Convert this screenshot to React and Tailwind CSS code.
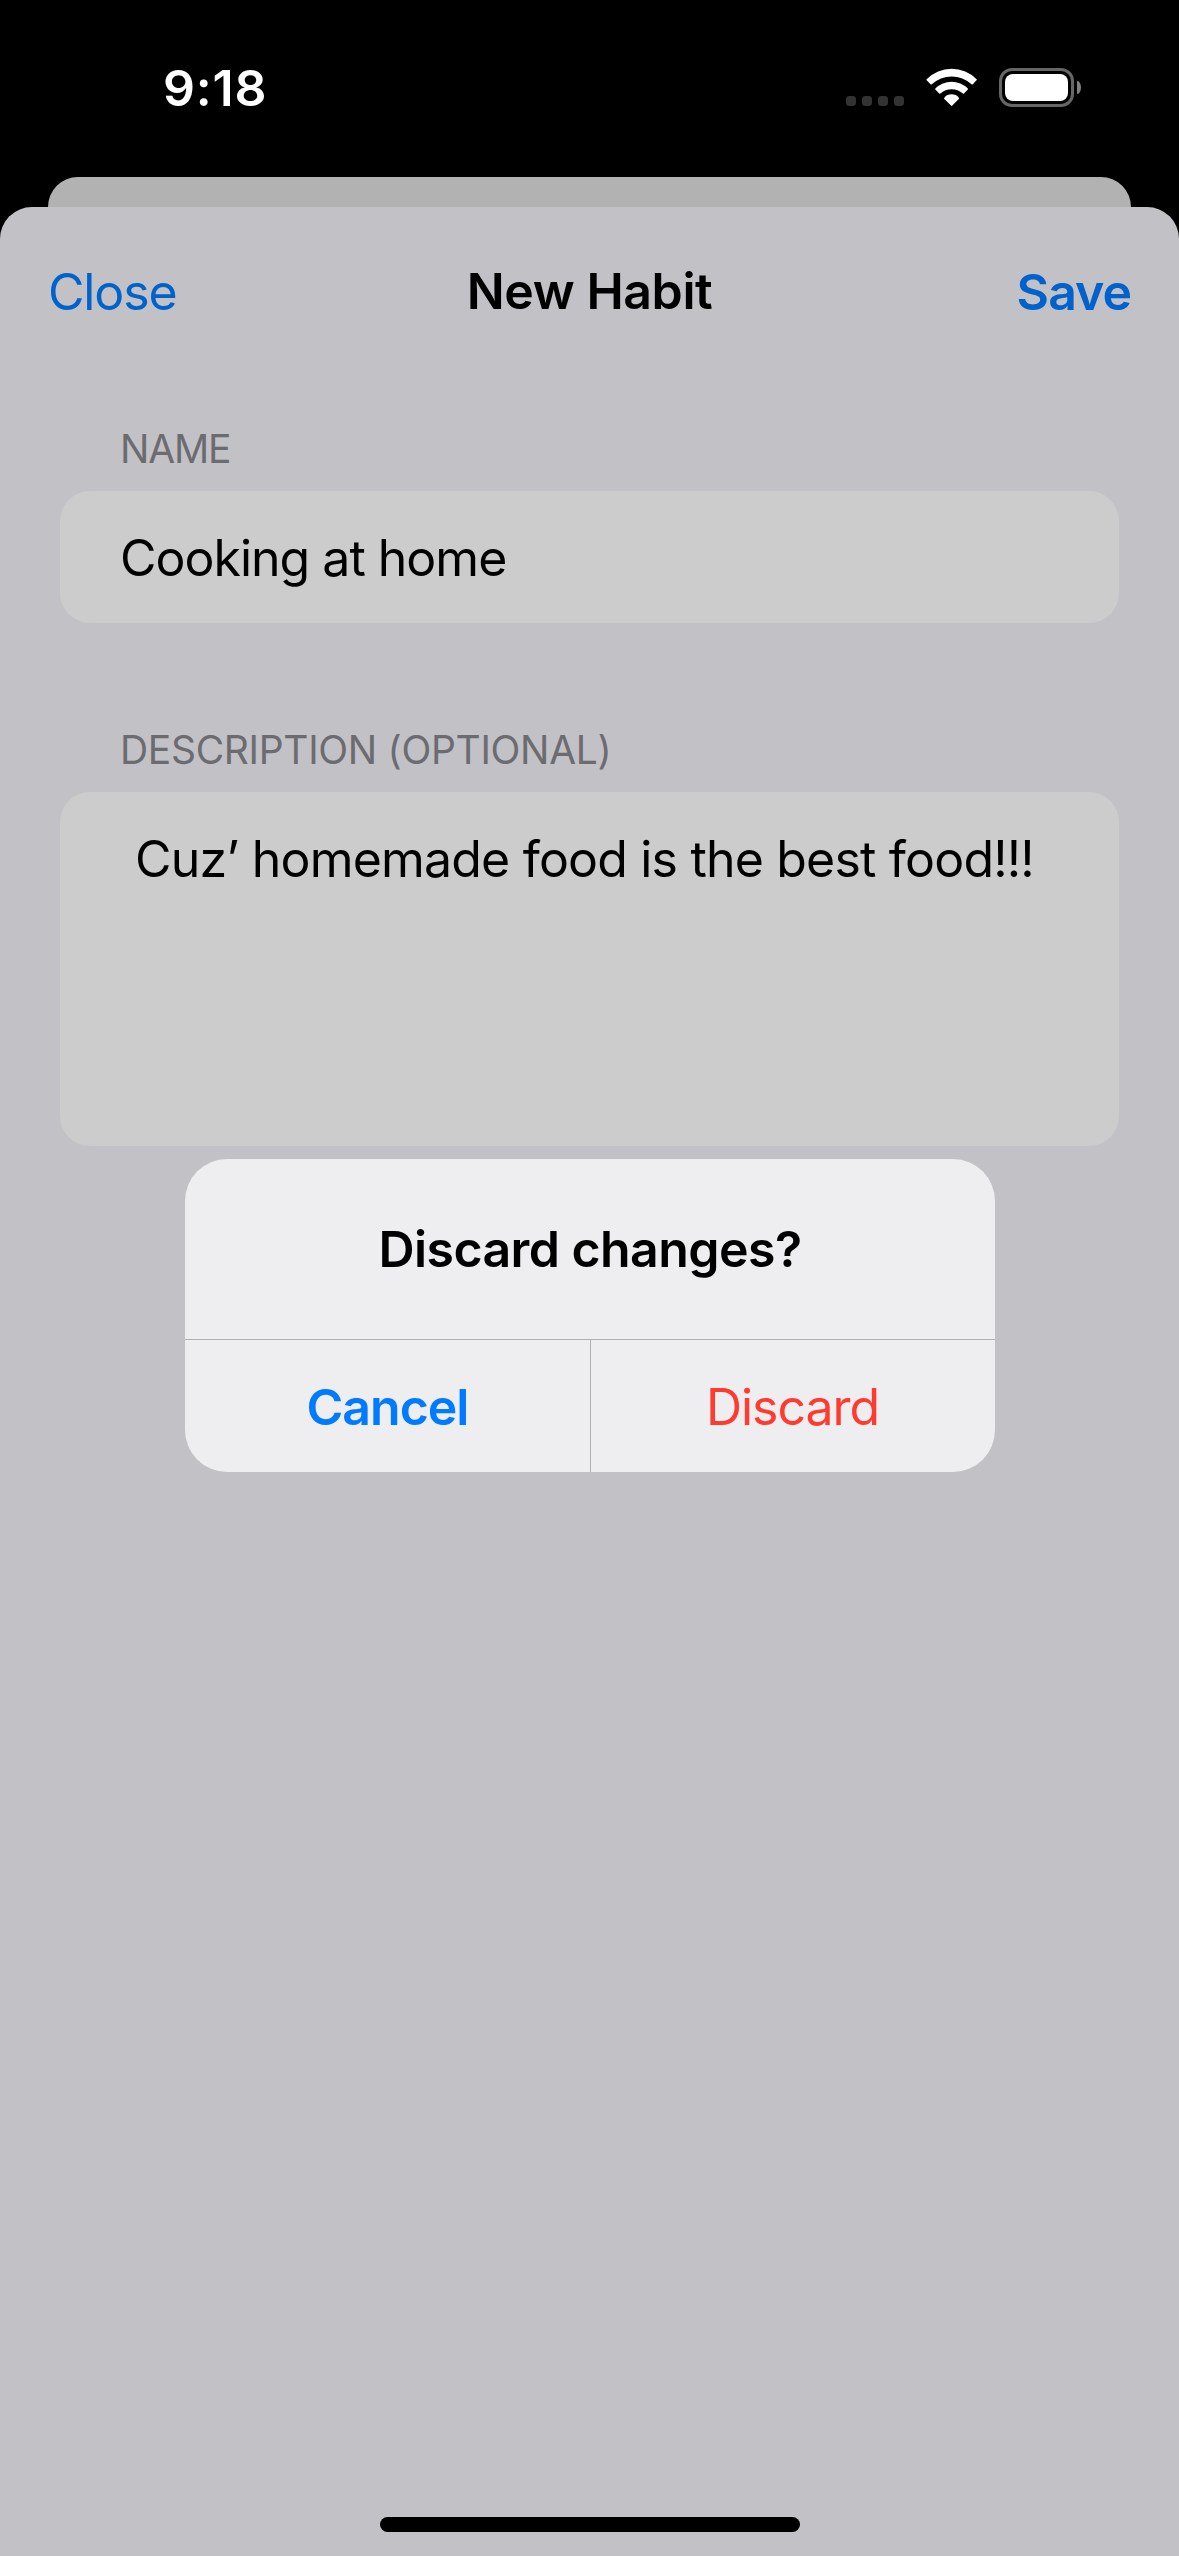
function SignalDots() {
  return (
    <div className="mt-[27px] flex gap-[6px]">
      {[0, 1, 2, 3].map((i) => (
        <span key={i} className="h-[10px] w-[10px] rounded-[3.5px] bg-[#333333]" />
      ))}
    </div>
  );
}

function WifiIcon() {
  return (
    <svg className="-mt-[2px] ml-[21px] h-[40px] w-[53px]" viewBox="375 81 159 120" fill="#fff">
      <path d="M380 117.500A106 106 0 0 1 530 117.500Q531 119.500 529.500 121L518.500 132.500Q516.500 134.500 514.500 133A87 87 0 0 0 395.500 133Q393.500 134.500 391.500 132.500L380 121Q378.500 119.500 380 117.500Z" />
      <path d="M406.500 145A68 68 0 0 1 503 145Q505 147 503 149L492 160.500Q490.500 162 488.500 160.500A50 50 0 0 0 421 160.500Q419.500 162 417.500 160.500L406.500 149Q404.500 147 406.500 145Z" />
      <path d="M433 173A28 28 0 0 1 476.500 173Q478.500 175 476.500 177L457 196.500Q455 199 453 196.500L433 177Q431 175 433 173Z" />
    </svg>
  );
}

function BatteryIcon() {
  return (
    <div className="-mt-px ml-[21px] flex items-center gap-[3px]">
      <div className="h-[39px] w-[75px] rounded-[13px] border-[3px] border-[#666666] p-[3px]">
        <div className="h-full w-full rounded-[8px] bg-white" />
      </div>
      <div className="h-[13px] w-[4px] rounded-r-[4px_7px] bg-[#808080]" />
    </div>
  );
}

function StatusBar() {
  return (
    <div className="flex h-[177px] items-start justify-between pr-[98px] pl-[163px]">
      <div className="mt-[58px] text-[50px] leading-[60px] font-semibold tracking-[0.8px] text-white">
        9:18
      </div>
      <div className="flex items-start pt-[69px]">
        <SignalDots />
        <WifiIcon />
        <BatteryIcon />
      </div>
    </div>
  );
}

function Header() {
  return (
    <div className="grid grid-cols-3 px-[48px] pt-[55px] text-[50px] leading-[60px]">
      <button className="text-left tracking-[-1.15px] text-[#0062cc]">Close</button>
      <h1 className="-mt-px text-center font-semibold tracking-[-0.4px]">New Habit</h1>
      <button className="text-right font-semibold tracking-[-1px] text-[#0062cc]">Save</button>
    </div>
  );
}

function Label({ children }) {
  return (
    <div className="mt-[103px] mb-[18px] pl-[60px] text-[39px] leading-[48px] text-[#6c6c70]">
      {children}
    </div>
  );
}

function DiscardAlert() {
  return (
    <div className="absolute top-[1159px] left-[185px] w-[810px] overflow-hidden rounded-[42px] bg-[#eeeef0] text-center text-[50px] leading-[60px]">
      <div className="border-b border-[#b0b0b4] pt-[60px] pb-[60px] font-semibold tracking-[-0.56px]">
        Discard changes?
      </div>
      <div className="flex h-[132px]">
        <button className="w-[406px] border-r border-[#b0b0b4] pt-px font-semibold tracking-[-1px] text-[#007aff]">
          Cancel
        </button>
        <button className="flex-1 pt-px pr-px tracking-[-1.03px] text-[#ff3b30]">Discard</button>
      </div>
    </div>
  );
}

export default function App() {
  return (
    <div className="relative flex h-[2556px] w-[1179px] flex-col overflow-hidden bg-black font-['Inter',sans-serif] text-black">
      <StatusBar />
      <div className="mx-[48px] -mb-[30px] h-[60px] shrink-0 rounded-t-[30px] bg-[#b2b2b2]" />
      <div className="relative flex flex-1 flex-col rounded-t-[32px] bg-[#c2c1c6]">
        <Header />
        <div className="px-[60px]">
          <Label>
            <span className="tracking-[-1.2px]">NAME</span>
          </Label>
          <div className="flex h-[132px] items-center rounded-[30px] bg-[#cccccc] pt-px pl-[60px] text-[50px] leading-[60px] tracking-[-1px]">
            Cooking at home
          </div>
          <Label>
            <span className="tracking-[-0.32px]">DESCRIPTION (OPTIONAL)</span>
          </Label>
          <div className="h-[354px] rounded-[30px] bg-[#cccccc] pt-[37px] pl-[75px] text-[50px] leading-[60px] tracking-[-0.81px]">
            Cuz’ homemade food is the best food!!!
          </div>
        </div>
        <div className="mt-auto mb-[24px] h-[15px] w-[420px] self-center rounded-full bg-black" />
      </div>
      <DiscardAlert />
    </div>
  );
}
